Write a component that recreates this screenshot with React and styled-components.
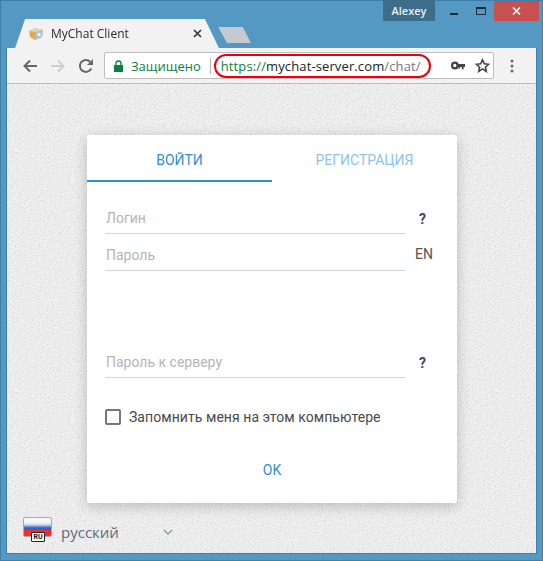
import styled, { createGlobalStyle } from 'styled-components';

const noise = `url("data:image/svg+xml,%3Csvg xmlns='http://www.w3.org/2000/svg' width='240' height='240'%3E%3Cfilter id='n'%3E%3CfeTurbulence type='fractalNoise' baseFrequency='0.6' numOctaves='2' stitchTiles='stitch'/%3E%3CfeColorMatrix values='0 0 0 0 0.5 0 0 0 0 0.5 0 0 0 0 0.5 0.5 0.5 0.5 0 -0.62'/%3E%3C/filter%3E%3Crect width='240' height='240' filter='url(%23n)'/%3E%3C/svg%3E")`;

const GlobalStyle = createGlobalStyle`
  html, body {
    margin: 0;
    padding: 0;
    overflow: hidden;
  }
  * {
    box-sizing: border-box;
  }
`;

const Screen = styled.div`
  width: 543px;
  height: 561px;
  background-color: #5499c3;
  border: 1px solid #3f7ea8;
  display: flex;
  flex-direction: column;
  font-family: 'Roboto', 'Liberation Sans', sans-serif;
`;

const TitleBar = styled.div`
  height: 47px;
  flex: none;
  display: flex;
  justify-content: space-between;
  padding: 0 3px 0 14px;
`;

const TabStrip = styled.div`
  display: flex;
  align-items: flex-start;
  align-self: flex-end;
  height: 29px;
  filter: drop-shadow(0 0 0.5px #33698c);
`;

const Tab = styled.div`
  width: 204px;
  height: 29px;
  background: #f2f2f2;
  clip-path: polygon(0 100%, 10px 0, 190px 0, 204px 100%);
  display: flex;
  align-items: center;
  padding: 0 17px 0 13px;
`;

const TabTitle = styled.span`
  flex: 1;
  margin-left: 7px;
  font-family: 'Open Sans', 'Noto Sans', sans-serif;
  font-size: 12px;
  color: #2b2b2b;
  white-space: nowrap;
`;

const NewTab = styled.div`
  width: 33px;
  height: 16px;
  margin: 8px 0 0 -1px;
  background: #c6cace;
  clip-path: polygon(0 0, 25px 0, 33px 100%, 9px 100%);
`;

const WindowControls = styled.div`
  display: flex;
  height: 20px;
`;

const UserBadge = styled.div`
  width: 52px;
  margin-top: -1px;
  height: 21px;
  background: #3e6d8b;
  color: #e6edf2;
  font-family: 'Open Sans', 'Noto Sans', sans-serif;
  font-size: 11px;
  font-weight: 600;
  display: flex;
  align-items: center;
  justify-content: center;
`;

const ControlButton = styled.div`
  width: ${(p) => p.$width}px;
  margin-left: ${(p) => p.$offset || 0}px;
  display: flex;
  align-items: center;
  justify-content: center;
  background: ${(p) => p.$bg || 'transparent'};
`;

const Browser = styled.div`
  flex: 1;
  margin: 0 5px 6px;
  border: solid #3f7ea8;
  border-width: 0 1px 1px;
  display: flex;
  flex-direction: column;
  min-height: 0;
`;

const Toolbar = styled.div`
  height: 36px;
  flex: none;
  background: #f2f2f2;
  border-bottom: 1px solid #bcbcbc;
  display: flex;
  align-items: center;
  padding: 0 0 0 14px;
`;

const NavIcon = styled.div`
  width: ${(p) => p.$width || 28}px;
  height: 20px;
  display: flex;
  align-items: center;
  justify-content: center;
  flex: none;
`;

const Omnibox = styled.div`
  width: 390px;
  height: 27px;
  margin-left: 9px;
  flex: none;
  background: #fff;
  border: 1px solid #bdbdbd;
  border-radius: 2px;
  display: flex;
  align-items: center;
  padding-left: 9px;
  font-family: 'Open Sans', 'Noto Sans', sans-serif;
  font-size: 13px;
  white-space: nowrap;
`;

const Secure = styled.span`
  color: #0b8043;
  margin-left: 8px;
`;

const Divider = styled.span`
  width: 1px;
  height: 16px;
  background: #b5b5b5;
  margin: 0 3px 0 9px;
`;

const UrlHighlight = styled.span`
  width: 217px;
  height: 24px;
  border: 2px solid #e8000d;
  border-radius: 12px;
  display: flex;
  align-items: center;
  padding-left: 5px;
  color: #222;
  letter-spacing: 0.12px;
`;

const UrlScheme = styled.span`
  color: #0b8043;
`;

const UrlPath = styled.span`
  color: #777;
`;

const OmniIcons = styled.div`
  display: flex;
  align-items: center;
  gap: 10px;
  margin-left: 20px;
`;

const Page = styled.div`
  flex: 1;
  min-height: 0;
  background-color: #f3f3f3;
  background-image: ${noise};
  display: flex;
  flex-direction: column;
  padding-top: 51px;
`;

const Card = styled.div`
  width: 370px;
  height: 368px;
  margin-left: 80px;
  background: #fff;
  border-radius: 2px;
  box-shadow: 0 3px 14px rgba(0, 0, 0, 0.22);
  display: flex;
  flex-direction: column;
  flex: none;
`;

const Tabs = styled.div`
  display: flex;
  height: 47px;
  flex: none;
`;

const TabButton = styled.div`
  width: 50%;
  display: flex;
  align-items: center;
  justify-content: center;
  padding-top: 5px;
  font-size: 14px;
  color: ${(p) => (p.$active ? '#2f8fd8' : '#8cc3ec')};
  border-bottom: 2px solid ${(p) => (p.$active ? '#2f8fd8' : 'transparent')};
`;

const Form = styled.div`
  display: flex;
  flex-direction: column;
  padding: 15px 0 0 18px;
  flex: 1;
`;

const FieldRow = styled.div`
  display: flex;
  align-items: center;
  height: 37px;
  margin-bottom: ${(p) => p.$gap || 0}px;
`;

const Field = styled.div`
  width: 300px;
  height: 37px;
  border-bottom: 1px solid #ccd9d9;
  display: flex;
  align-items: center;
  padding: 5px 0 0 1px;
  font-size: 14px;
  color: #b5b5b5;
`;

const Help = styled.span`
  margin: 6px 0 0 11px;
  width: 13px;
  font-size: 14px;
  font-weight: 700;
  color: #3f4656;
  text-align: center;
`;

const Lang = styled.span`
  margin: 2px 0 0 10px;
  font-size: 14px;
  color: #555;
`;

const Remember = styled.label`
  display: flex;
  align-items: center;
  gap: 8px;
  margin-top: 31px;
  font-size: 14px;
  letter-spacing: 0.06px;
  color: #4a4a4a;
`;

const Checkbox = styled.span`
  width: 16px;
  height: 16px;
  border: 2px solid #777;
  border-radius: 2px;
`;

const OkButton = styled.div`
  margin: 37px 18px 0 0;
  text-align: center;
  font-size: 14px;
  color: #2f8fd8;
`;

const LangPicker = styled.div`
  display: flex;
  align-items: flex-start;
  margin: 14px 0 0 16px;
  color: #5f6b7a;
  font-family: 'Open Sans', 'Noto Sans', sans-serif;
  font-size: 15px;
`;

const Flag = styled.div`
  position: relative;
  width: 29px;
  height: 20px;
  border: 1px solid #aaa;
  border-radius: 2px;
  background: linear-gradient(#f6f6f6 0 22%, #cfdcf0 36%, #2f62c2 55% 64%, #f02d2d 68%);
  flex: none;
`;

const FlagBadge = styled.span`
  position: absolute;
  left: 7px;
  bottom: -6px;
  width: 14px;
  height: 10px;
  background: #fff;
  border: 1px solid #222;
  border-radius: 1px;
  font-family: 'Roboto', sans-serif;
  font-size: 7px;
  font-weight: 700;
  line-height: 8px;
  text-align: center;
  color: #111;
`;

const LangName = styled.span`
  margin: 5px 0 0 9px;
  line-height: 20px;
  width: 102px;
`;

const Chevron = styled.svg`
  margin-top: 12px;
`;

export default function App() {
  return (
    <Screen>
      <GlobalStyle />
      <TitleBar>
        <TabStrip>
          <Tab>
            <svg width="16" height="13" viewBox="0 0 16 13">
              <path d="M1 4l6-3 8 2-1 7-7 3-5-3z" fill="#e2a94e" />
              <path d="M7 5l8-2-1 7-7 3z" fill="#a9c4d8" />
              <path d="M1 4l6-3 8 2-8 2z" fill="#d8d8d2" />
              <circle cx="11" cy="7.5" r="1.6" fill="#fff" />
            </svg>
            <TabTitle>MyChat Client</TabTitle>
            <svg width="9" height="9" viewBox="0 0 9 9">
              <path d="M1 1l7 7M8 1l-7 7" stroke="#333" strokeWidth="1.6" />
            </svg>
          </Tab>
          <NewTab />
        </TabStrip>
        <WindowControls>
          <UserBadge>Alexey</UserBadge>
          <ControlButton $width={38}>
            <svg width="9" height="9" viewBox="0 0 9 9">
              <rect x="0" y="6" width="8" height="2" fill="#1c2b36" />
            </svg>
          </ControlButton>
          <ControlButton $width={16}>
            <svg width="10" height="8" viewBox="0 0 10 8">
              <path d="M.5 1.500h9v6h-9z" fill="none" stroke="#1c2b36" />
              <path d="M0 .5h10" stroke="#1c2b36" strokeWidth="1.4" />
            </svg>
          </ControlButton>
          <ControlButton $width={45} $offset={5} $bg="#c75050">
            <svg width="9" height="8" viewBox="0 0 9 8">
              <path d="M1 .5l7 7M8 .5l-7 7" stroke="#fff" strokeWidth="1.6" />
            </svg>
          </ControlButton>
        </WindowControls>
      </TitleBar>
      <Browser>
        <Toolbar>
          <NavIcon $width={18}>
            <svg width="16" height="14" viewBox="0 0 16 14">
              <path d="M15 7H3M8 1.500L2.500 7 8 12.500" fill="none" stroke="#666" strokeWidth="2" />
            </svg>
          </NavIcon>
          <NavIcon $width={38}>
            <svg width="16" height="14" viewBox="0 0 16 14">
              <path d="M1 7h12M8 1.500L13.500 7 8 12.500" fill="none" stroke="#cfcfcf" strokeWidth="2" />
            </svg>
          </NavIcon>
          <NavIcon $width={18}>
            <svg width="16" height="16" viewBox="0 0 16 16">
              <path d="M13.300 10.500A6 6 0 1 1 12.200 3.700" fill="none" stroke="#666" strokeWidth="2" />
              <path d="M15 1v6H9z" fill="#666" />
            </svg>
          </NavIcon>
          <Omnibox>
            <svg width="9" height="12" viewBox="0 0 9 12">
              <path d="M0 5h9v7H0z" fill="#0b8043" />
              <path d="M2 5V3.500a2.500 2.500 0 0 1 5 0V5" fill="none" stroke="#0b8043" strokeWidth="1.300" />
            </svg>
            <Secure>Защищено</Secure>
            <Divider />
            <UrlHighlight>
              <UrlScheme>https://</UrlScheme>mychat-server.com<UrlPath>/chat/</UrlPath>
            </UrlHighlight>
            <OmniIcons>
              <svg width="14" height="9" viewBox="0 0 15 9">
                <circle cx="4.200" cy="4.500" r="3" fill="none" stroke="#444" strokeWidth="2.400" />
                <path d="M6 3h9v3h-1.500v2.500h-2V6H9.500v2H8V6H6z" fill="#444" />
              </svg>
              <svg width="15" height="15" viewBox="0 0 16 15">
                <path d="M8 1.500l1.900 4.200 4.600.5-3.400 3.100.9 4.500L8 11.100l-4 2.700.9-4.500L1.500 6.200l4.600-.5z" fill="none" stroke="#444" strokeWidth="1.700" />
              </svg>
            </OmniIcons>
          </Omnibox>
          <NavIcon $width={36}>
            <svg width="4" height="14" viewBox="0 0 4 14">
              <circle cx="2" cy="2" r="1.500" fill="#666" />
              <circle cx="2" cy="7" r="1.500" fill="#666" />
              <circle cx="2" cy="12" r="1.500" fill="#666" />
            </svg>
          </NavIcon>
        </Toolbar>
        <Page>
          <Card>
            <Tabs>
              <TabButton $active>ВОЙТИ</TabButton>
              <TabButton>РЕГИСТРАЦИЯ</TabButton>
            </Tabs>
            <Form>
              <FieldRow>
                <Field>Логин</Field>
                <Help>?</Help>
              </FieldRow>
              <FieldRow $gap={70}>
                <Field>Пароль</Field>
                <Lang>EN</Lang>
              </FieldRow>
              <FieldRow>
                <Field>Пароль к серверу</Field>
                <Help>?</Help>
              </FieldRow>
              <Remember>
                <Checkbox />
                Запомнить меня на этом компьютере
              </Remember>
              <OkButton>OK</OkButton>
            </Form>
          </Card>
          <LangPicker>
            <Flag>
              <FlagBadge>RU</FlagBadge>
            </Flag>
            <LangName>русский</LangName>
            <Chevron width="10" height="6" viewBox="0 0 10 6">
              <path d="M1 1l4 4 4-4" fill="none" stroke="#8a93a6" strokeWidth="1.400" />
            </Chevron>
          </LangPicker>
        </Page>
      </Browser>
    </Screen>
  );
}
